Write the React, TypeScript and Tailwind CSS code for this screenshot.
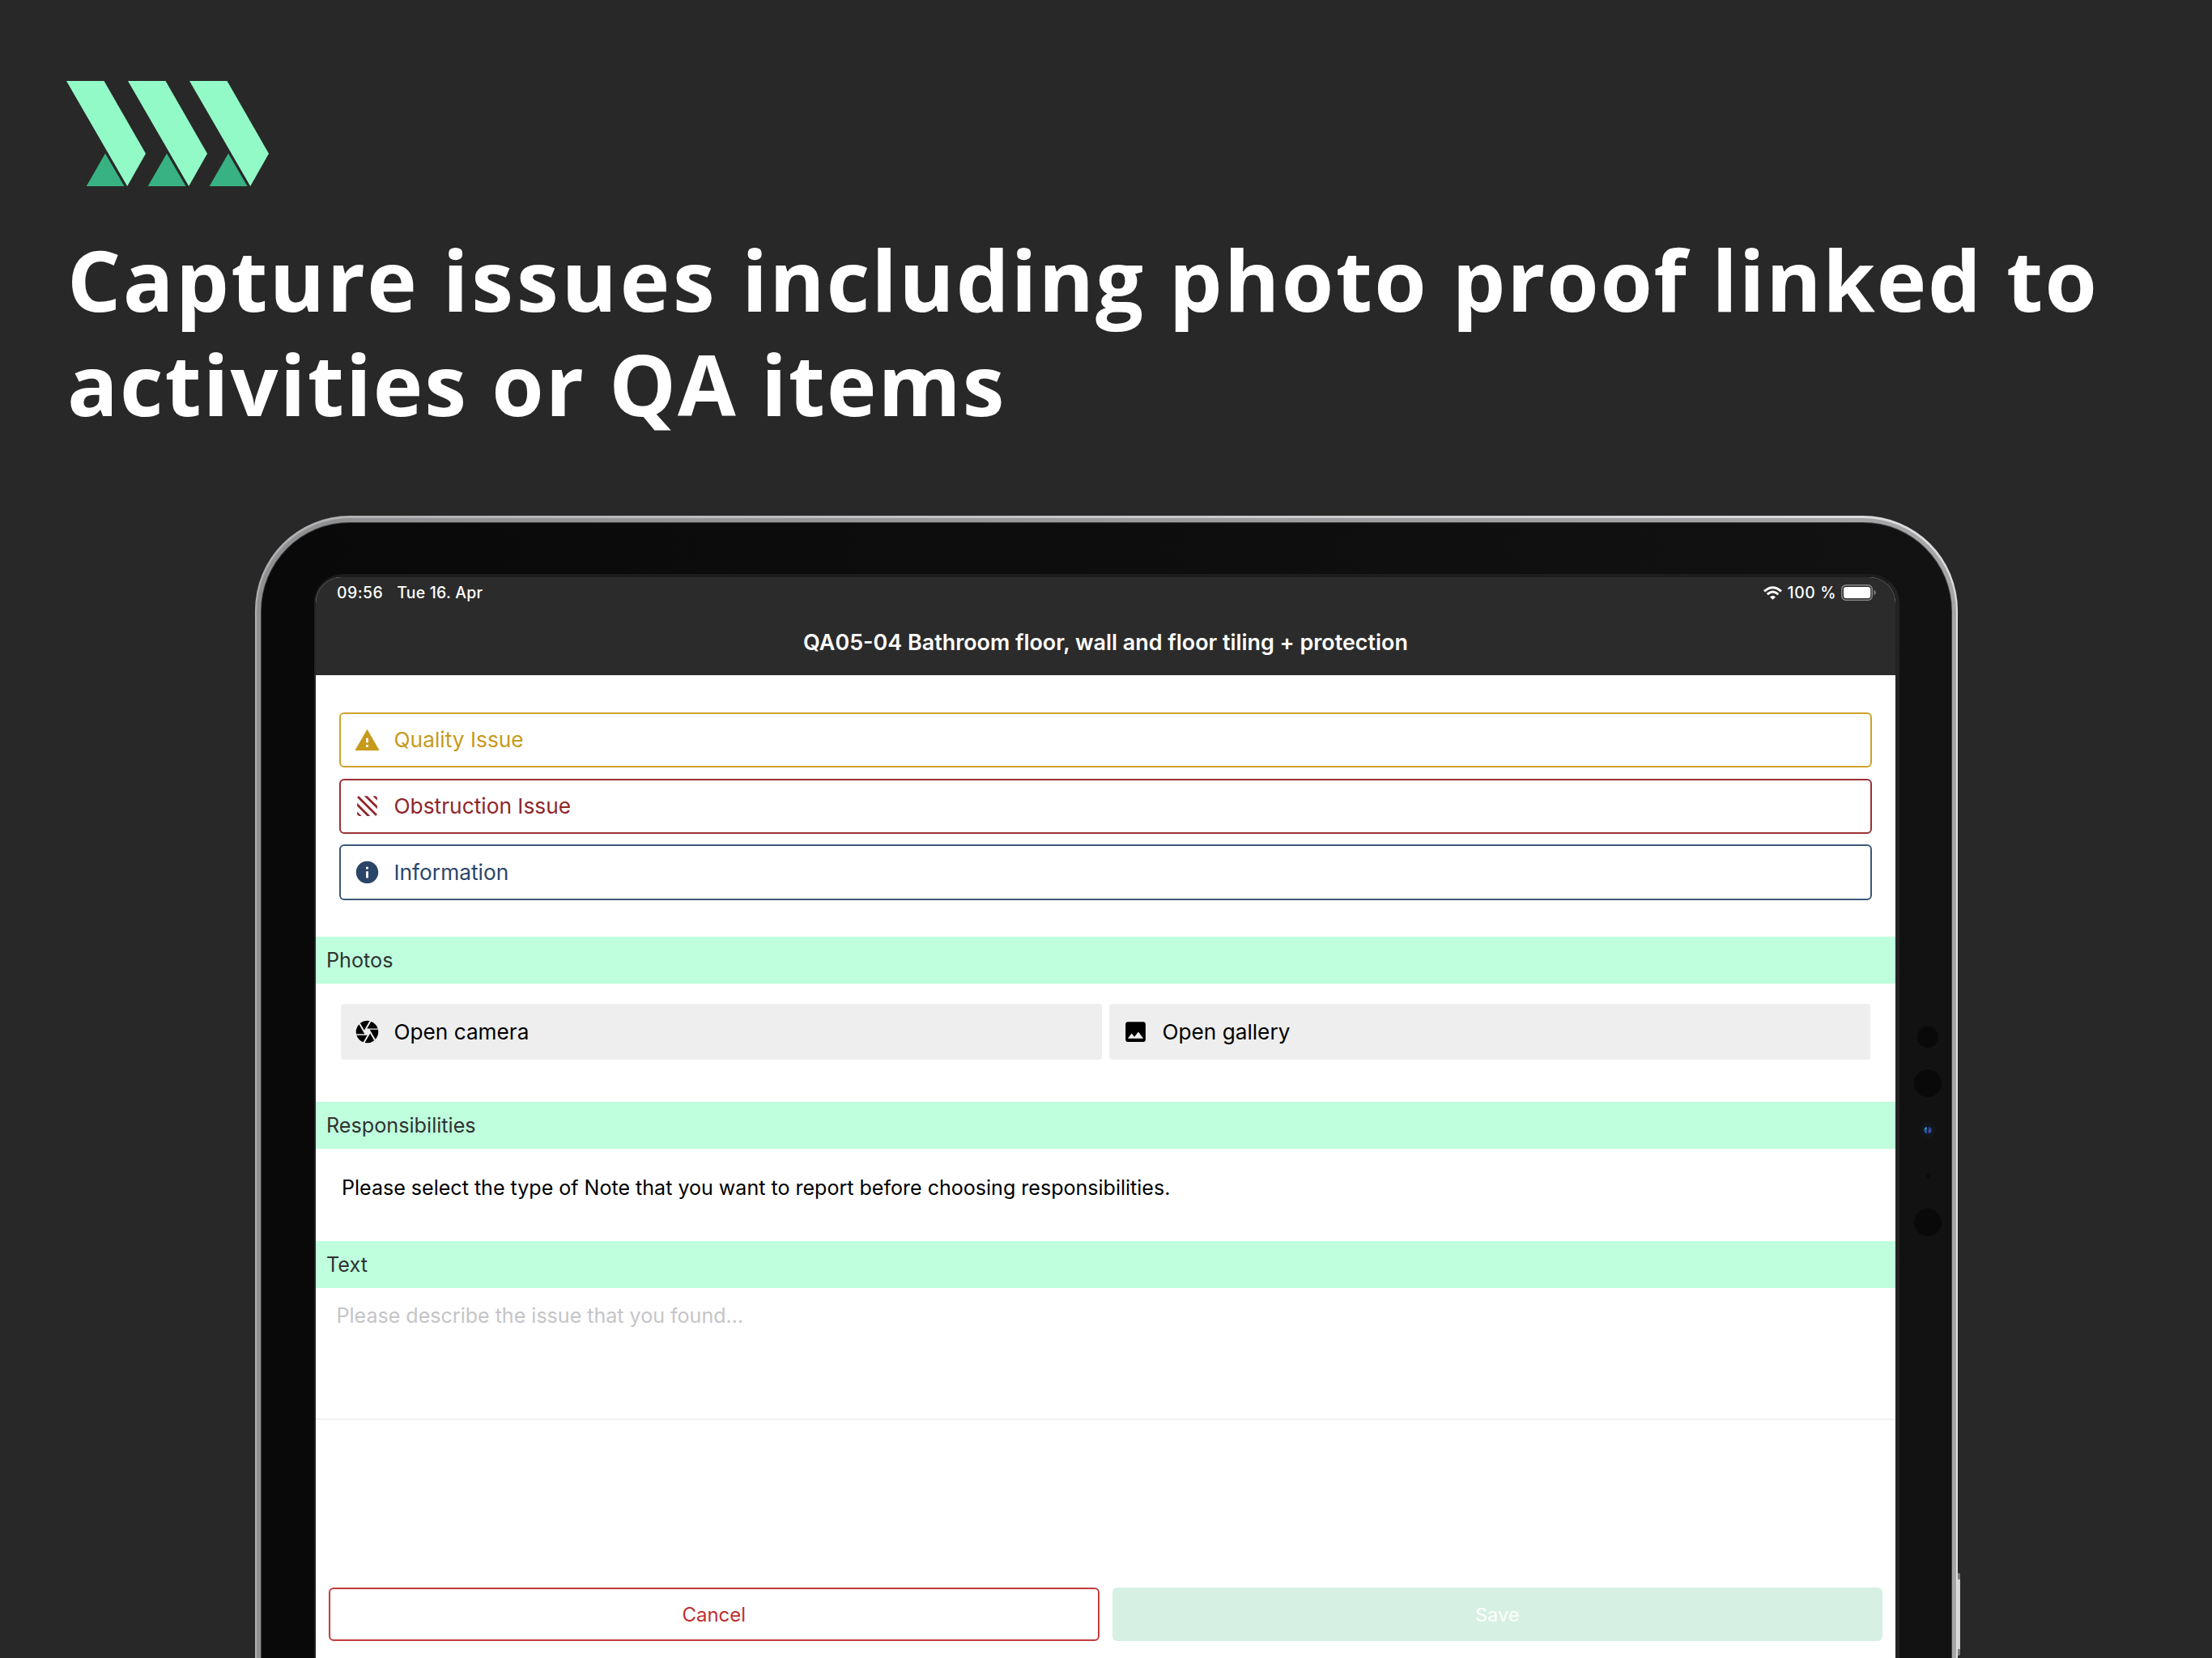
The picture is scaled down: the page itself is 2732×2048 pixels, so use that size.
import type { ReactNode } from 'react';
import { MdCamera, MdImage, MdInfo, MdTexture, MdWarning } from 'react-icons/md';

function Logo() {
  return (
    <svg width="252" height="132" viewBox="0 0 252 132" className="block">
      {[0, 76, 152].map((x) => (
        <g key={x} transform={`translate(${x} 0)`}>
          <path d="M0 0H46.5L98 89.7L75.2 130Z" fill="#92fac7" />
          <path d="M48 89.4L71.5 130H24.7Z" fill="#38b283" />
        </g>
      ))}
    </svg>
  );
}

function WifiIcon() {
  return (
    <svg width="23" height="17" viewBox="0 0 23 17" className="block">
      <g fill="none" stroke="#fff" strokeWidth="3">
        <path d="M1 6.4Q11.5 -3 22 6.4" />
        <path d="M4.7 10.2Q11.5 3.8 18.3 10.2" />
      </g>
      <path d="M11.5 16.8L8 13.4Q11.5 10.2 15 13.4Z" fill="#fff" />
    </svg>
  );
}

function BatteryIcon() {
  return (
    <svg width="44" height="20" viewBox="0 0 44 20" className="block">
      <rect x="0.8" y="0.8" width="37.4" height="18.4" rx="5" fill="none" stroke="#8a8a8a" strokeWidth="1.5" />
      <rect x="3" y="3" width="33.2" height="14" rx="3" fill="#fff" />
      <path d="M40.3 6.6Q43 8 43 10Q43 12 40.3 13.4Z" fill="#777" />
    </svg>
  );
}

function StatusBar() {
  return (
    <div className="flex h-[31px] items-end justify-between pr-[23px] pl-[26px] text-[19.4px] leading-[24px] font-medium text-white">
      <div className="flex gap-[17px]">
        <span className="tracking-[0.5px]">09:56</span>
        <span className="tracking-[0.25px]">Tue 16. Apr</span>
      </div>
      <div className="flex items-center">
        <WifiIcon />
        <span className="ml-[6px] tracking-[0.6px]">100 %</span>
        <span className="ml-[6px]">
          <BatteryIcon />
        </span>
      </div>
    </div>
  );
}

function TypeButton({ icon, label, tone }: { icon: ReactNode; label: string; tone: string }) {
  return (
    <button className={`flex h-[68.5px] w-full items-center gap-[16.5px] rounded-[6px] border-2 pl-[16px] text-[26.3px] ${tone}`}>
      {icon}
      <span>{label}</span>
    </button>
  );
}

function PhotoButton({ icon, label }: { icon: ReactNode; label: string }) {
  return (
    <button className="flex h-[69px] items-center gap-[16.5px] rounded-[4px] bg-[#eeeeee] pl-[16px] text-[26.2px] text-black">
      {icon}
      <span>{label}</span>
    </button>
  );
}

function SectionHeader({ children }: { children: ReactNode }) {
  return (
    <h2 className="flex h-[58px] shrink-0 items-center bg-[#bfffdd] pt-px pl-[13px] text-[25.2px] text-[#2f3331]">{children}</h2>
  );
}

function Screen() {
  return (
    <div className="flex h-[1335px] flex-col overflow-hidden rounded-t-[32px] bg-white">
      <header className="h-[121px] shrink-0 bg-[#2b2b2b]">
        <StatusBar />
        <h1 className="mt-[32px] text-center text-[26.9px] leading-[34px] font-semibold text-white">
          QA05-04 Bathroom floor, wall and floor tiling + protection
        </h1>
      </header>

      <div className="flex h-[323px] shrink-0 flex-col gap-[13.3px] pt-[45.8px] pr-[29px] pl-[29px]">
        <TypeButton icon={<MdWarning size={33} />} label="Quality Issue" tone="border-[#cda32c] text-[#c69a1b]" />
        <TypeButton icon={<MdTexture size={33} className="-scale-x-100" />} label="Obstruction Issue" tone="border-[#9b3033] text-[#8f2629]" />
        <TypeButton icon={<MdInfo size={33} />} label="Information" tone="border-[#3c587b] text-[#2b4568]" />
      </div>

      <SectionHeader>Photos</SectionHeader>
      <div className="grid h-[146px] shrink-0 grid-cols-2 gap-[9px] px-[31px] pt-[25px]">
        <PhotoButton icon={<MdCamera size={33} />} label="Open camera" />
        <PhotoButton icon={<MdImage size={33} />} label="Open gallery" />
      </div>

      <SectionHeader>Responsibilities</SectionHeader>
      <p className="h-[114px] shrink-0 pt-[32px] pl-[32px] text-[25.05px] leading-[32px] text-black">
        Please select the type of Note that you want to report before choosing responsibilities.
      </p>

      <SectionHeader>Text</SectionHeader>
      <div className="h-[163px] shrink-0 border-b-2 border-[#f0f0f0] pt-[18px] pl-[25.5px] text-[25.05px] leading-[32px] text-[#c5c5c7]">
        Please describe the issue that you found...
      </div>

      <footer className="mt-auto mb-[21px] grid grid-cols-2 gap-[16px] px-[16px] text-[24px]">
        <button className="h-[66px] rounded-[6px] border-2 border-[#c43c3c] pt-[2px] text-[#c12f2f]">Cancel</button>
        <button className="h-[66px] rounded-[6px] bg-[#d6f0e4] pt-[2px] text-[23.5px] text-white">Save</button>
      </footer>
    </div>
  );
}

/* Front sensors along the landscape-right bezel. */
function Sensors() {
  return (
    <div className="absolute top-[622px] right-[12px] flex w-[34px] flex-col items-center">
      <span className="size-[26px] rounded-full bg-[#090909]" />
      <span className="mt-[27px] size-[34px] rounded-full bg-[#090909]" />
      <span className="mt-[31px] flex size-[19px] items-center justify-center rounded-full bg-[#15181b]">
        <svg width="12" height="12" viewBox="0 0 12 12">
          <circle cx="6" cy="6" r="5.5" fill="#0b1422" />
          <path d="M5 1.5Q1 3 1.2 6.5Q2 10 5 10.5Z" fill="#20558c" />
          <path d="M7 1.5Q11 3 10.8 6.5Q10 10 7 10.5Z" fill="#274b9c" />
          <path d="M2 3.5L4.5 2V5L2 5.5Z" fill="#2f93ad" />
          <circle cx="7.6" cy="7" r="1.3" fill="#7440b0" />
        </svg>
      </span>
      <span className="mt-[44px] size-[7px] rounded-full bg-[#0d0d0d]" />
      <span className="mt-[37px] size-[34px] rounded-full bg-[#090909]" />
    </div>
  );
}

function Tablet() {
  return (
    <div className="relative ml-[315px] w-[2103px]">
      <div className="absolute top-[1306px] right-[-3px] h-[102px] w-[5px] rounded-r-[2px] border-y-8 border-[#7d7d7d] bg-[#d4d4d4]" />
      <div className="relative rounded-t-[117px] bg-linear-to-r from-[#b0b0b2] to-[#dedee0] px-[2px] pt-[3px]">
        <div className="rounded-t-[115px] bg-linear-to-r from-[#8f9092] to-[#a6a6a9] px-[5px] pt-[5px]">
          <div className="rounded-t-[110px] bg-[#3d3e3e] px-px pt-px">
            <div className="relative h-[1402px] rounded-t-[109px] bg-linear-to-r from-[#090909] to-[#121212] pt-[63px] pr-[64px] pl-[65px]">
              <div className="rounded-t-[36px] border-t-4 border-r-[5px] border-l-2 border-t-[#1d1d1d] border-r-[#222] border-l-[#222]">
                <Screen />
              </div>
              <Sensors />
            </div>
          </div>
        </div>
      </div>
    </div>
  );
}

export default function App() {
  return (
    <main className="h-[2048px] w-[2732px] overflow-hidden bg-[#282828] font-['Inter',sans-serif]">
      <div className="h-[637px] pt-[100px] pl-[82px]">
        <Logo />
        <p className="mt-[48px] ml-[1px] font-['Open_Sans',sans-serif] text-[104px] leading-[129px] font-bold tracking-[2.45px] whitespace-nowrap text-white">
          Capture <span className="tracking-[3.9px]">issues</span> <span className="tracking-[2.2px]">including</span> photo{' '}
          <span className="tracking-[1.8px]">proof</span> <span className="tracking-[1.8px]">linked</span> to
          <br />
          <span className="tracking-[2.1px]">activities or QA items</span>
        </p>
      </div>
      <Tablet />
    </main>
  );
}
